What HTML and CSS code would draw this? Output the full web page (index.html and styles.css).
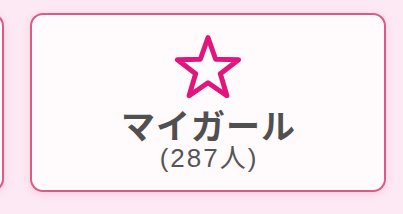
FILE: index.html
```html
<!DOCTYPE html>
<html lang="ja">
<head>
<meta charset="utf-8">
<link rel="stylesheet" href="styles.css">
</head>
<body>
<div class="row">
  <div class="card card-prev"></div>
  <div class="card card-main">
    <svg class="star" viewBox="0 0 68 65" width="68" height="65" aria-hidden="true">
      <path d="M34 2.6 L41.64 24.23 L64.6 24.8 L46.36 38.77 L52.9 60.7 L34 47.75 L15.1 60.7 L21.64 38.77 L3.4 24.8 L26.36 24.23 Z" fill="none" stroke="#e2157c" stroke-width="5" stroke-linejoin="round"/>
    </svg>
    <div class="title">マイガール</div>
    <div class="count">(287人)</div>
  </div>
</div>
</body>
</html>
```
FILE: styles.css
```css
html, body {
  margin: 0;
  padding: 0;
  background: #fde9f3;
  width: 403px;
  height: 214px;
  overflow: hidden;
}
.row {
  display: flex;
  gap: 26px;
  padding-top: 13px;
  margin-left: -96px;
}
.card {
  box-sizing: border-box;
  height: 179px;
  border: 2.5px solid #dc5a84;
  border-radius: 13px;
  background: #fffbfd;
  box-shadow: 0 2px 8px rgba(220, 90, 132, 0.18);
}
.card-prev {
  width: 100px;
  flex: none;
}
.card-main {
  width: 356px;
  flex: none;
  display: flex;
  flex-direction: column;
  align-items: center;
  padding-top: 19.5px;
}
.star {
  display: block;
}
.title {
  margin-top: 8px;
  padding-left: 1px;
  font-family: "Noto Sans CJK JP", "Noto Sans", sans-serif;
  font-weight: 700;
  font-size: 34px;
  line-height: 34px;
  color: #505050;
  letter-spacing: 1px;
}
.count {
  margin-top: 2px;
  padding-left: 2px;
  font-family: "Liberation Sans", "Noto Sans CJK JP", sans-serif;
  font-size: 26px;
  line-height: 28px;
  color: #555555;
  letter-spacing: 2px;
}
```
